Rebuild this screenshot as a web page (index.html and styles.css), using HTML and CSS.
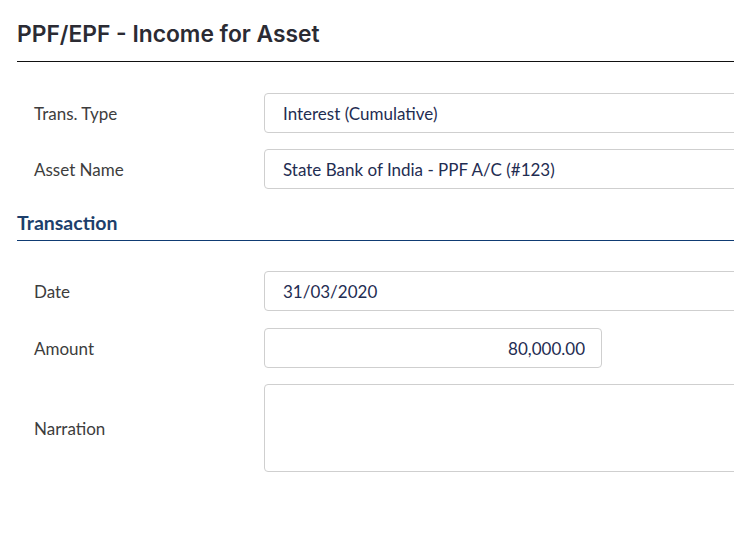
FILE: index.html
```html
<!DOCTYPE html>
<html lang="en">
<head>
<meta charset="utf-8">
<title>PPF/EPF - Income for Asset</title>
<link rel="stylesheet" href="styles.css">
</head>
<body>
<div class="page">
  <header class="page-header">
    <h1 class="page-title">PPF/EPF - Income for Asset</h1>
  </header>

  <form class="form">
    <div class="form-row">
      <label class="form-label">Trans. Type</label>
      <input class="form-input" type="text" value="Interest (Cumulative)" readonly>
    </div>
    <div class="form-row">
      <label class="form-label">Asset Name</label>
      <input class="form-input" type="text" value="State Bank of India - PPF A/C (#123)" readonly>
    </div>

    <h2 class="section-title">Transaction</h2>

    <div class="section-body">
      <div class="form-row form-row-date">
        <label class="form-label">Date</label>
        <input class="form-input" type="text" value="31/03/2020">
      </div>
      <div class="form-row">
        <label class="form-label">Amount</label>
        <input class="form-input form-input-amount" type="text" value="80,000.00">
      </div>
      <div class="form-row form-row-tall">
        <label class="form-label">Narration</label>
        <textarea class="form-input form-textarea"></textarea>
      </div>
    </div>
  </form>
</div>
</body>
</html>
```

FILE: styles.css
```css
html, body {
  margin: 0;
  padding: 0;
  overflow: hidden;
  background: #ffffff;
}

body {
  font-family: Lato, "Liberation Sans", sans-serif;
  font-size: 17px;
  color: #333333;
}

.page {
  width: 900px;
  padding-left: 17px;
}

.page-header {
  padding-top: 18px;
  padding-bottom: 11px;
  border-bottom: 1px solid #111111;
}

.page-title {
  margin: 0;
  font-family: Inter, "Open Sans", sans-serif;
  font-weight: 600;
  font-size: 22.8px;
  line-height: 32px;
  color: #2b2b33;
}

.form {
  margin: 0;
  padding-top: 31px;
}

.form-row {
  display: flex;
  align-items: center;
  height: 40px;
  margin-bottom: 16px;
}

.form-row-date {
  margin-bottom: 17px;
}

.form-row-tall {
  height: 88px;
}

.form-label {
  flex: 0 0 247px;
  box-sizing: border-box;
  padding-left: 17px;
  color: #3d3d3d;
  font-size: 17px;
}

.form-input {
  flex: 1 1 auto;
  box-sizing: border-box;
  height: 40px;
  margin: 0;
  padding: 0 16px 0 18px;
  border: 1px solid #cfcfcf;
  border-radius: 4px;
  background: #ffffff;
  font-family: Lato, "Liberation Sans", sans-serif;
  font-size: 17px;
  color: #1f2d52;
  outline: none;
}

.form-input-amount {
  flex: 0 0 338px;
  text-align: right;
}

.form-textarea {
  height: 88px;
  resize: none;
}

.section-title {
  margin: 22px 0 0 0;
  padding-bottom: 5px;
  font-size: 19.5px;
  font-weight: 700;
  line-height: 24px;
  color: #1d3f6c;
  border-bottom: 1px solid #0f3b73;
}

.section-body {
  padding-top: 30px;
}
```
